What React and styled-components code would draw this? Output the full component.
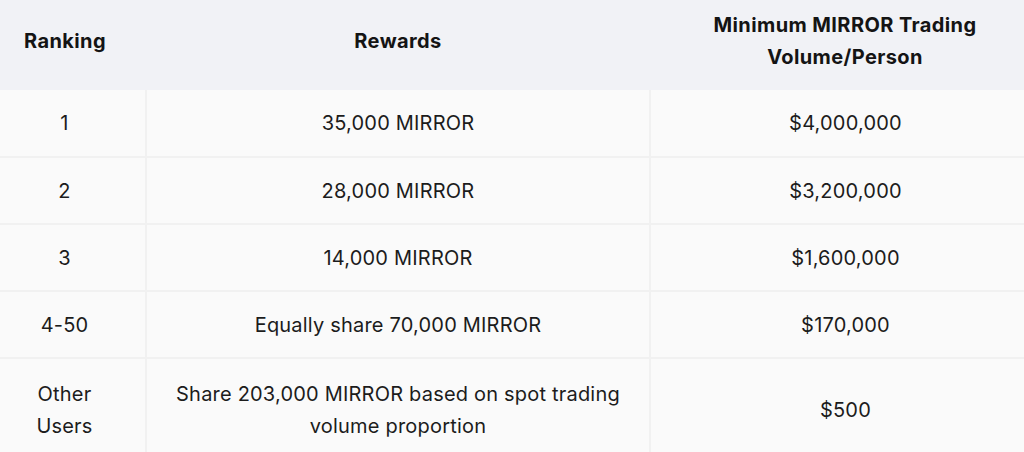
import styled, { createGlobalStyle } from "styled-components";

const GlobalStyle = createGlobalStyle`
  html, body {
    margin: 0;
    padding: 0;
    background: #fafafa;
  }
  body {
    font-family: Inter, "Noto Sans", sans-serif;
    color: #1c1c1c;
  }
`;

const rows = [
  { rank: "1", reward: "35,000 MIRROR", volume: "$4,000,000" },
  { rank: "2", reward: "28,000 MIRROR", volume: "$3,200,000" },
  { rank: "3", reward: "14,000 MIRROR", volume: "$1,600,000" },
  { rank: "4-50", reward: "Equally share 70,000 MIRROR", volume: "$170,000" },
  {
    rank: "Other\nUsers",
    reward: "Share 203,000 MIRROR based on spot trading volume proportion",
    volume: "$500",
    tall: true,
  },
];

export default function App() {
  return (
    <>
      <GlobalStyle />
      <Table>
        <colgroup>
          <col style={{ width: 146 }} />
          <col style={{ width: 504 }} />
          <col style={{ width: 374 }} />
        </colgroup>
        <thead>
          <tr>
            <Th $pos="first">Ranking</Th>
            <Th>Rewards</Th>
            <Th $pos="last">
              Minimum MIRROR Trading
              <br />
              Volume/Person
            </Th>
          </tr>
        </thead>
        <tbody>
          {rows.map((r) => (
            <Row key={r.rank} $tall={r.tall}>
              <Td $pos="first">{r.rank}</Td>
              <Td>{r.reward}</Td>
              <Td $pos="last">{r.volume}</Td>
            </Row>
          ))}
        </tbody>
      </Table>
    </>
  );
}

// the table runs past the picture on both sides, so the outer columns are off-centre
const sidePad = (p) =>
  p.$pos === "first"
    ? "padding-left: 4px; padding-right: 20px;"
    : p.$pos === "last"
    ? "padding-left: 20px; padding-right: 4px;"
    : "padding-left: 20px; padding-right: 20px;";

const Table = styled.table`
  width: 1024px;
  table-layout: fixed;
  border-collapse: collapse;
  background: #fafafa;
`;

const Th = styled.th`
  height: 82px;
  padding-top: 0;
  padding-bottom: 8px;
  ${sidePad}
  background: #f1f2f6;
  font-size: 20px;
  font-weight: 700;
  line-height: 32px;
  letter-spacing: 0.4px;
  text-align: center;
  color: #141414;
`;

const Row = styled.tr`
  height: ${(p) => (p.$tall ? "102px" : "67px")};
`;

const Td = styled.td`
  padding-top: 0;
  padding-bottom: 0;
  ${sidePad}
  font-size: 20px;
  font-weight: 400;
  line-height: 32px;
  letter-spacing: 0.2px;
  text-align: center;
  white-space: pre-line;
  border-top: 2px solid #f1f1f1;
  border-right: ${(p) => (p.$pos === "last" ? "none" : "2px solid #f1f1f1")};
  tr:first-child > & {
    border-top: none;
  }
`;
